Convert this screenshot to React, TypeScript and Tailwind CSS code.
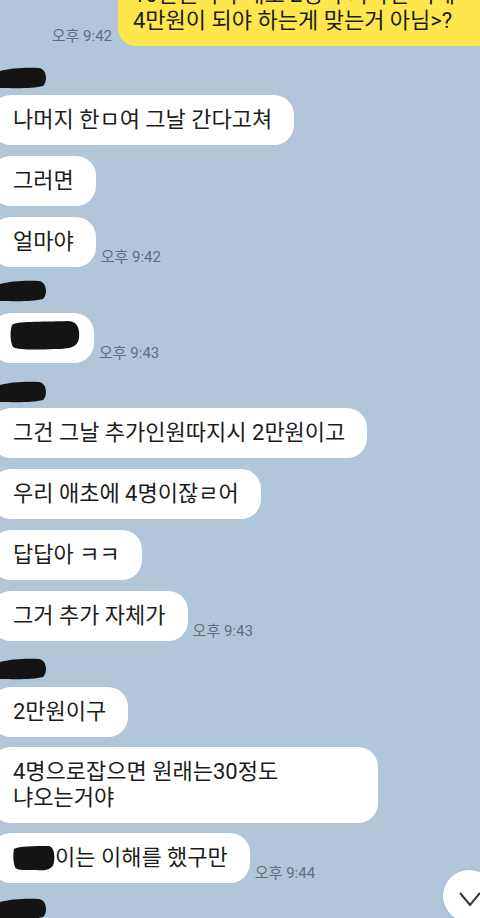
import type { ReactNode } from 'react';

function NameMark({ className }: { className: string }) {
  return (
    <svg className={className} width="48" height="22" viewBox="0 0 48 22">
      <path d="M0 4 C10 1 28 0 39 1 C47 2 48 15 43 19 C32 22 12 21 0 21 Z" fill="#141414" />
    </svg>
  );
}

function Bubble({ children, time, className = '' }: { children: ReactNode; time?: string; className?: string }) {
  return (
    <div className={`flex items-end gap-[5px] ${className}`}>
      <div className="ml-[-9px] rounded-[20px] bg-white py-[12px] pl-[22px] pr-[22px] text-[22px] leading-[26px] text-[#1c1c1c]">
        {children}
      </div>
      {time && <span className="mb-[1px] text-[15px] leading-[18px] text-[#5e6e7e]">{time}</span>}
    </div>
  );
}

export default function App() {
  return (
    <div className="relative h-[918px] w-full overflow-hidden bg-[#b2c6d9] font-['Roboto','Noto_Sans_CJK_KR',sans-serif]">
      {/* my message, cut off at the top */}
      <div className="mt-[-30px] flex items-end justify-end gap-[6px]">
        <span className="mb-[1px] text-[15px] leading-[18px] text-[#5e6e7e]">오후 9:42</span>
        <div className="mr-[-14px] w-[376px] rounded-[18px] bg-[#fde74c] py-[12px] pl-[15px] text-[22px] leading-[26px] text-[#1c1c1c]">
          10만원이라 애초 2명 추가하면 되게
          <br />
          4만원이 되야 하는게 맞는거 아님&gt;?
        </div>
      </div>

      <NameMark className="mt-[21px] mb-[6px] block" />
      <Bubble>나머지 한ㅁ여 그날 간다고쳐</Bubble>
      <Bubble className="mt-[11px]">그러면</Bubble>
      <Bubble className="mt-[11px]" time="오후 9:42">얼마야</Bubble>

      <NameMark className="mt-[13px] mb-[11px] block" />
      <div className="flex items-end gap-[5px]">
        <div className="ml-[-9px] rounded-[20px] bg-white pt-[7px] pb-[13px] pl-[19px] pr-[14px]">
          <svg className="block" width="70" height="30" viewBox="0 0 70 30">
            <path d="M2 5 C6 1 30 2 58 1 C68 1 70 10 69 18 C68 27 60 29 45 29 C25 30 8 30 3 27 C0 22 0 10 2 5 Z" fill="#141414" />
          </svg>
        </div>
        <span className="mb-[1px] text-[15px] leading-[18px] text-[#5e6e7e]">오후 9:43</span>
      </div>

      <NameMark className="mt-[18px] mb-[5px] block" />
      <Bubble>그건 그날 추가인원따지시 2만원이고</Bubble>
      <Bubble className="mt-[11px]">우리 애초에 4명이잖ㄹ어</Bubble>
      <Bubble className="mt-[11px]">답답아 ㅋㅋ</Bubble>
      <Bubble className="mt-[11px]" time="오후 9:43">그거 추가 자체가</Bubble>

      <NameMark className="mt-[17px] mb-[7px] block" />
      <Bubble>2만원이구</Bubble>
      <div className="mt-[10px] flex">
        <div className="ml-[-9px] w-[387px] rounded-[20px] bg-white py-[12px] pl-[22px] text-[22px] leading-[26px] text-[#1c1c1c]">
          4명으로잡으면 원래는30정도
          <br />
          냐오는거야
        </div>
      </div>
      <Bubble className="mt-[10px]" time="오후 9:44">
        <svg className="inline-block align-top" width="42" height="26" viewBox="0 0 42 26">
          <path d="M1 4 C6 1 20 1 36 1 C41 2 42 10 41 17 C40 24 34 26 24 25 C12 25 4 26 2 22 C0 17 0 9 1 4 Z" fill="#141414" />
        </svg>
        이는 이해를 했구만
      </Bubble>

      <NameMark className="mt-[15px] block" />

      {/* scroll to bottom button */}
      <div className="absolute left-[443px] top-[870px] h-[52px] w-[52px] rounded-full bg-white shadow-[0_1px_3px_rgba(0,0,0,0.15)]">
        <svg className="absolute left-0 top-0" width="52" height="52" viewBox="0 0 52 52">
          <path d="M17 23 L27 35 L37 23" fill="none" stroke="#333" strokeWidth="2" />
        </svg>
      </div>
    </div>
  );
}
